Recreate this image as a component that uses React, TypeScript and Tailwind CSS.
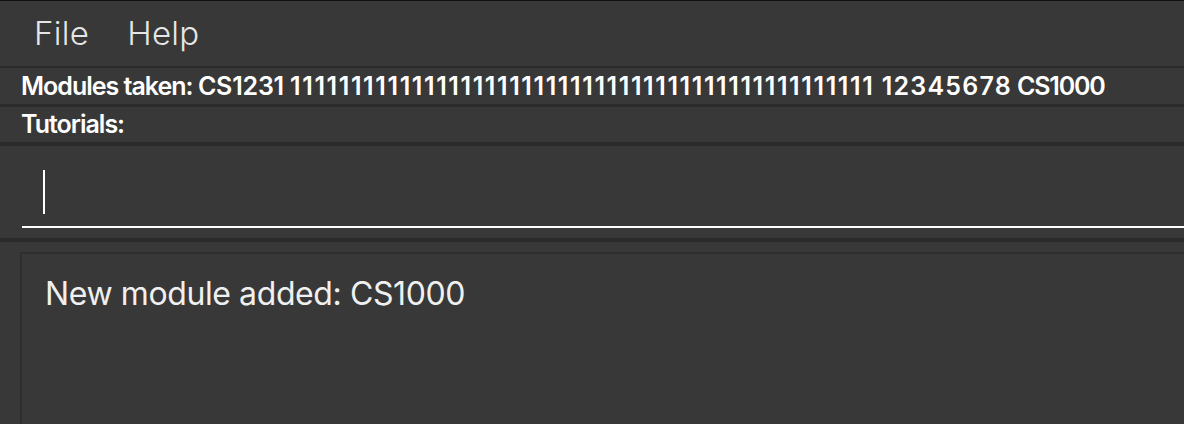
import React from "react";

export default function App() {
  const font = { fontFamily: "Inter, 'Noto Sans', sans-serif" };
  return (
    <div
      className="w-[1184px] h-[424px] overflow-hidden bg-[#383838] flex flex-col border-t border-[#111111]"
      style={font}
    >
      {/* menu bar */}
      <div className="h-[65px] flex items-center gap-[38px] pl-[34px] text-[33px] text-[#e6e6e6] font-light tracking-[0.3px] shrink-0">
        <span>File</span>
        <span>Help</span>
      </div>
      <div className="h-[2px] bg-[#2b2b2b] shrink-0" />
      {/* modules row */}
      <div className="h-[36px] flex items-center pl-[21px] text-[25px] leading-none font-semibold text-white shrink-0">
        <span className="whitespace-pre">
          <span className="tracking-[-1px]">Modules taken: </span>
          <span className="tracking-[-0.2px]">CS1231 </span>
          <span className="tracking-[1.6px]">111111111111111111111111111111111111111111111111</span>
          <span className="tracking-[1.2px]"> 12345678</span>
          <span className="tracking-[-1.2px]"> CS1000</span>
        </span>
      </div>
      <div className="h-[3px] bg-[#2b2b2b] shrink-0" />
      {/* tutorials row */}
      <div className="h-[35px] flex items-center pl-[21px] text-[25px] leading-none font-semibold text-white tracking-[-1px] shrink-0">
        Tutorials:
      </div>
      <div className="h-[4px] bg-[#2b2b2b] shrink-0" />
      {/* command box */}
      <div className="h-[92px] pl-[22px] pt-[24px] shrink-0">
        <div className="h-[58px] border-b-2 border-white flex pl-[21px]">
          <div className="w-[2px] h-[44px] bg-white" />
        </div>
      </div>
      <div className="h-[4px] bg-[#2b2b2b] shrink-0" />
      {/* result */}
      <div className="flex-1 pl-[20px] pt-[10px]">
        <div className="h-full border-l-2 border-t-2 border-[#2e2e2e] pl-[23px] pt-[16px]">
          <div className="text-[32px] text-[#f0f0f0] tracking-[-0.4px]">
            New module added: CS1000
          </div>
        </div>
      </div>
    </div>
  );
}
